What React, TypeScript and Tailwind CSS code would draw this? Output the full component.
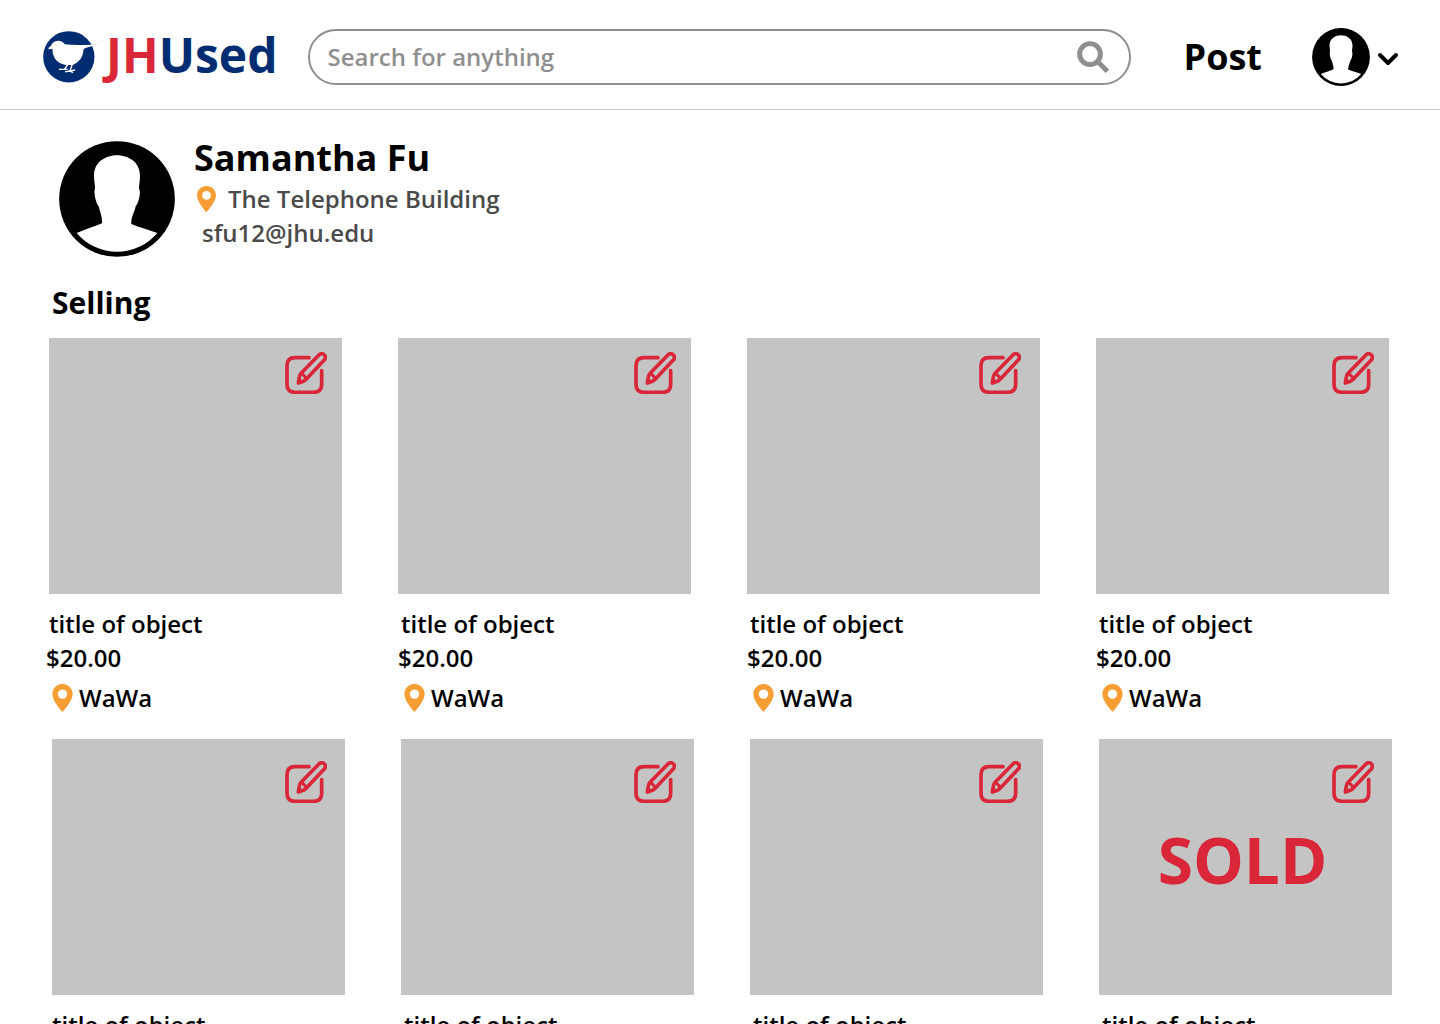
import React from "react";

function BirdLogo() {
  return (
    <svg viewBox="38 35 180 156" className="h-[52px] w-[60px] shrink-0" aria-hidden="true">
      <circle cx="115.500" cy="112.500" r="77" fill="#002D72" />
      <path
        d="M54 86 L62 79 Q67 65 83 64 Q97 65 104 75 Q130 79 184 76 L214 64 L217 67 L184 81 Q168 84 160 89 Q158 114 145 125 Q138 132 128 137 L106 137 Q84 132 74 118 Q66 106 66 88 L55 90 Z"
        fill="#fff"
      />
      <path
        d="M113 135 L103 149 M86 150 L112 150 M126 135 L119 154 M104 157.500 L134 152 M116 153 L128 160"
        fill="none"
        stroke="#fff"
        strokeWidth="4"
      />
      <path d="M186 76 L216 63 L217 67 L190 78" fill="none" stroke="#ededed" strokeWidth="1.500" />
    </svg>
  );
}

function Avatar({ className }: { className: string }) {
  return (
    <svg viewBox="42 33 348 348" className={className} aria-hidden="true">
      <circle cx="216" cy="207" r="173.500" />
      <path
        d="M216 76 C247 76 285 94 285 137 C285 152 282 163 282 176 C288 183 283 216 272 229 C269 247 257 262 259 282 C284 293 310 299 337 309 A158 158 0 0 1 95 309 C120 298 146 291 171 280 C173 262 164 244 161 229 C150 216 146 183 150 176 C150 163 147 152 147 137 C147 94 185 76 216 76 Z"
        fill="#fff"
      />
    </svg>
  );
}

function Pin({ className }: { className: string }) {
  return (
    <svg viewBox="38 282 60 83" className={className} aria-hidden="true">
      <path
        fillRule="evenodd"
        fill="#F79D34"
        d="M68 282 C51 282 38 295 38 312 C38 334 68 365 68 365 C68 365 98 334 98 312 C98 295 85 282 68 282 Z M68 298 A14 14 0 1 1 68 326 A14 14 0 1 1 68 298 Z"
      />
    </svg>
  );
}

function EditIcon() {
  return (
    <svg
      viewBox="726 62 126 126"
      className="size-[42px]"
      fill="none"
      stroke="#D92638"
      strokeLinecap="round"
      strokeLinejoin="round"
      strokeWidth="11"
      aria-hidden="true"
    >
      <path d="M798 79 H756 Q732 79 732 103 V159 Q732 183 756 183 H812 Q836 183 836 159 V118" />
      <path d="M766 155 L769 137 Q770 130 775 125 L827 72 C833 64 841 67 844 71 C849 75 848 82 843 87 L793 140 Q788 146 781 150 Z" />
      <path d="M776 126 L791 141" strokeWidth="9" />
      <path d="M766 156 L769 144 L777 151 Z" strokeWidth="6" fill="#D92638" />
    </svg>
  );
}

type Item = { title: string; price: string; place: string; sold?: boolean; edit: string };

const firstRow: Item[] = [
  { title: "title of object", price: "$20.00", place: "WaWa", edit: "top-3.5 right-[15px]" },
  { title: "title of object", price: "$20.00", place: "WaWa", edit: "top-3.5 right-[15px]" },
  { title: "title of object", price: "$20.00", place: "WaWa", edit: "top-3.5 right-[19px]" },
  { title: "title of object", price: "$20.00", place: "WaWa", edit: "top-3.5 right-[15px]" },
];

const secondRow: Item[] = [
  { title: "title of object", price: "$20.00", place: "WaWa", edit: "top-[22px] right-[18px]" },
  { title: "title of object", price: "$20.00", place: "WaWa", edit: "top-[22px] right-[18px]" },
  { title: "title of object", price: "$20.00", place: "WaWa", edit: "top-[22px] right-[22px]" },
  { title: "title of object", price: "$20.00", place: "WaWa", edit: "top-[22px] right-[18px]", sold: true },
];

function Card({ item }: { item: Item }) {
  return (
    <li className="group">
      <div className="relative flex h-64 items-center justify-center bg-[#c4c4c4]">
        <button type="button" aria-label="Edit listing" className={`absolute ${item.edit}`}>
          <EditIcon />
        </button>
        {item.sold && <span className="pr-1.5 pb-3.5 text-[64px] leading-none font-bold text-[#D92638]">SOLD</span>}
      </div>
      <div className="mt-[13px] text-2xl leading-[34px] font-semibold group-first:-ml-[3px]">
        <h3 className="pl-[3px]">{item.title}</h3>
        <p>{item.price}</p>
        <p className="mt-1.5 flex items-center gap-1.5 pl-1.5">
          <Pin className="h-7 w-[21px]" />
          {item.place}
        </p>
      </div>
    </li>
  );
}

export default function App() {
  return (
    <div className="min-h-screen bg-white font-['Open_Sans',sans-serif] text-black">
      <header className="flex items-center border-b border-[#c4c4c4] pt-7 pr-10 pb-[23px] pl-[43px]">
        <a href="#home" className="flex items-center gap-[3px]" aria-label="JHUsed">
          <BirdLogo />
          <span className="pb-1 text-5xl leading-[52px] font-bold text-[#002D72]">
            <span className="text-[#D92638]">JH</span>Used
          </span>
        </a>
        <form role="search" className="ml-[30px] flex h-14 flex-1 items-center rounded-full border-2 border-[#8f8f8f] pr-5 pl-[18px]">
          <input
            type="text"
            aria-label="Search for anything"
            placeholder="Search for anything"
            className="min-w-0 flex-1 text-2xl font-semibold outline-none placeholder:text-[#8f8f8f]"
          />
          <button type="button" aria-label="Search">
            <svg viewBox="51 62 97 97" className="size-8" fill="none" stroke="#8f8f8f" strokeWidth="15" aria-hidden="true">
              <circle cx="90.500" cy="101.500" r="31.500" />
              <path d="M112 123 L143 154" />
            </svg>
          </button>
        </form>
        <a href="#post" className="ml-[53px] text-4xl leading-[56px] font-bold">
          Post
        </a>
        <button type="button" aria-label="Account menu" className="ml-[50px] flex items-center gap-1.5">
          <Avatar className="size-[58px]" />
          <svg viewBox="0 0 24 24" className="size-6" fill="none" stroke="#000" strokeWidth="4" strokeLinecap="round" strokeLinejoin="round" aria-hidden="true">
            <path d="M4 10 L12 18 L20 10" />
          </svg>
        </button>
      </header>
      <main className="pt-6">
        <section className="flex items-start pl-[59px]">
          <Avatar className="mt-[7px] size-[116px]" />
          <div className="ml-[19px] text-2xl leading-[34px] font-semibold text-[#4a4a4a]">
            <h1 className="text-4xl leading-[48px] font-bold text-black">Samantha Fu</h1>
            <p className="flex items-center gap-3 pl-[3px]">
              <Pin className="h-[26px] w-[19px]" />
              The Telephone Building
            </p>
            <p className="pl-2">sfu12@jhu.edu</p>
          </div>
        </section>
        <section className="mt-[26px]">
          <h2 className="pl-[52px] text-3xl leading-[40px] font-bold">Selling</h2>
          <ul className="mt-[15px] grid grid-cols-4 gap-14 pr-[51px] pl-[49px]">
            {firstRow.map((item, i) => (
              <Card key={i} item={item} />
            ))}
          </ul>
          <ul className="mt-6 grid grid-cols-4 gap-14 pr-12 pl-[52px]">
            {secondRow.map((item, i) => (
              <Card key={i} item={item} />
            ))}
          </ul>
        </section>
      </main>
    </div>
  );
}
